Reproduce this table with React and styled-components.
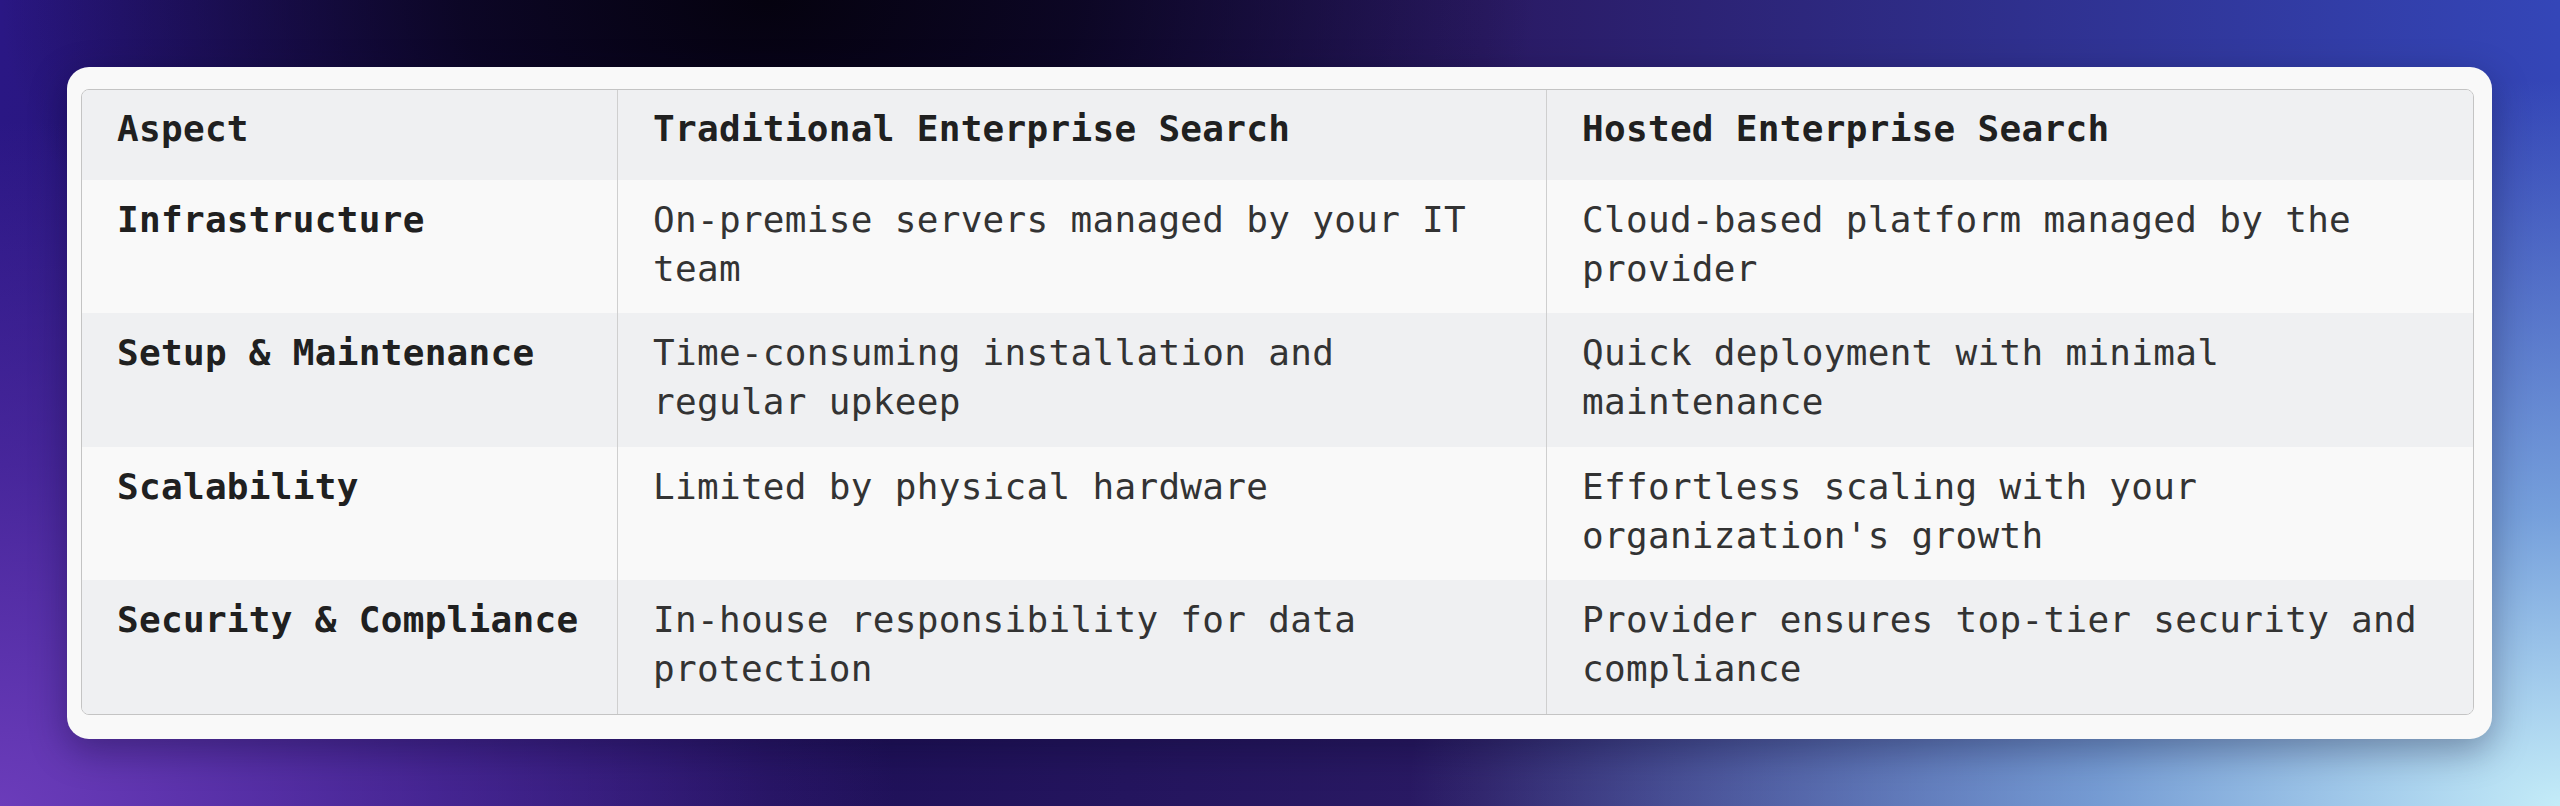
import React from "react";
import styled, { createGlobalStyle } from "styled-components";

const GlobalStyle = createGlobalStyle`
  * {
    box-sizing: border-box;
  }
  body {
    margin: 0;
    font-family: "DejaVu Sans Mono", "Liberation Mono", monospace;
  }
`;

const Page = styled.div`
  width: 2560px;
  height: 806px;
  padding: 67px 68px 67px 67px;
  background:
    radial-gradient(ellipse 30% 55% at 30% 0%, #05020f 0%, rgba(8, 4, 26, 0.85) 40%, transparent 100%),
    radial-gradient(ellipse 45% 90% at 100% 100%, #c4ecf8 0%, rgba(140, 190, 232, 0.75) 40%, transparent 100%),
    radial-gradient(ellipse 35% 85% at 0% 100%, #6b3cba 0%, rgba(90, 48, 170, 0.6) 50%, transparent 100%),
    linear-gradient(90deg, #2a1784 0%, #1e1058 30%, #2a1a64 58%, #3446b8 100%);
`;

const Card = styled.div`
  height: 100%;
  background: #f9f9f9;
  border-radius: 22px;
  padding: 22px 18px 24px 14px;
  box-shadow: 0 12px 36px rgba(10, 5, 40, 0.35);
`;

const Table = styled.div`
  display: grid;
  grid-template-columns: 536px 929px 1fr;
  height: 100%;
  border: 1px solid #c4c4c4;
  border-radius: 8px;
  overflow: hidden;
`;

const Row = styled.div`
  display: contents;
`;

const Cell = styled.div`
  padding-top: ${(p) => (p.$head ? "14px" : "15px")};
  padding-bottom: ${(p) => (p.$head ? "26px" : "20px")};
  padding-left: 35px;
  padding-right: ${(p) => (p.$first ? "20px" : "42px")};
  background: ${(p) => (p.$shade ? "#eff0f2" : "#f9f9f9")};
  border-right: ${(p) => (p.$last ? "none" : "1px solid #cfcfcf")};
  font-size: 36px;
  line-height: 49px;
  letter-spacing: 0.3px;
  font-weight: ${(p) => (p.$bold ? 700 : 400)};
  color: ${(p) => (p.$bold ? "#202020" : "#333333")};
`;

const headers = ["Aspect", "Traditional Enterprise Search", "Hosted Enterprise Search"];

const rows = [
  [
    "Infrastructure",
    "On-premise servers managed by your IT team",
    "Cloud-based platform managed by the provider",
  ],
  [
    "Setup & Maintenance",
    "Time-consuming installation and regular upkeep",
    "Quick deployment with minimal maintenance",
  ],
  [
    "Scalability",
    "Limited by physical hardware",
    "Effortless scaling with your organization's growth",
  ],
  [
    "Security & Compliance",
    "In-house responsibility for data protection",
    "Provider ensures top-tier security and compliance",
  ],
];

const App = () => {
  return (
    <>
      <GlobalStyle />
      <Page>
        <Card>
          <Table>
            <Row>
              {headers.map((h, i) => (
                <Cell key={h} $head $shade $bold $first={i === 0} $last={i === 2}>
                  {h}
                </Cell>
              ))}
            </Row>
            {rows.map((r, ri) => (
              <Row key={r[0]}>
                {r.map((text, ci) => (
                  <Cell
                    key={ci}
                    $shade={ri % 2 === 1}
                    $bold={ci === 0}
                    $first={ci === 0}
                    $last={ci === 2}
                  >
                    {text}
                  </Cell>
                ))}
              </Row>
            ))}
          </Table>
        </Card>
      </Page>
    </>
  );
};

export default App;
